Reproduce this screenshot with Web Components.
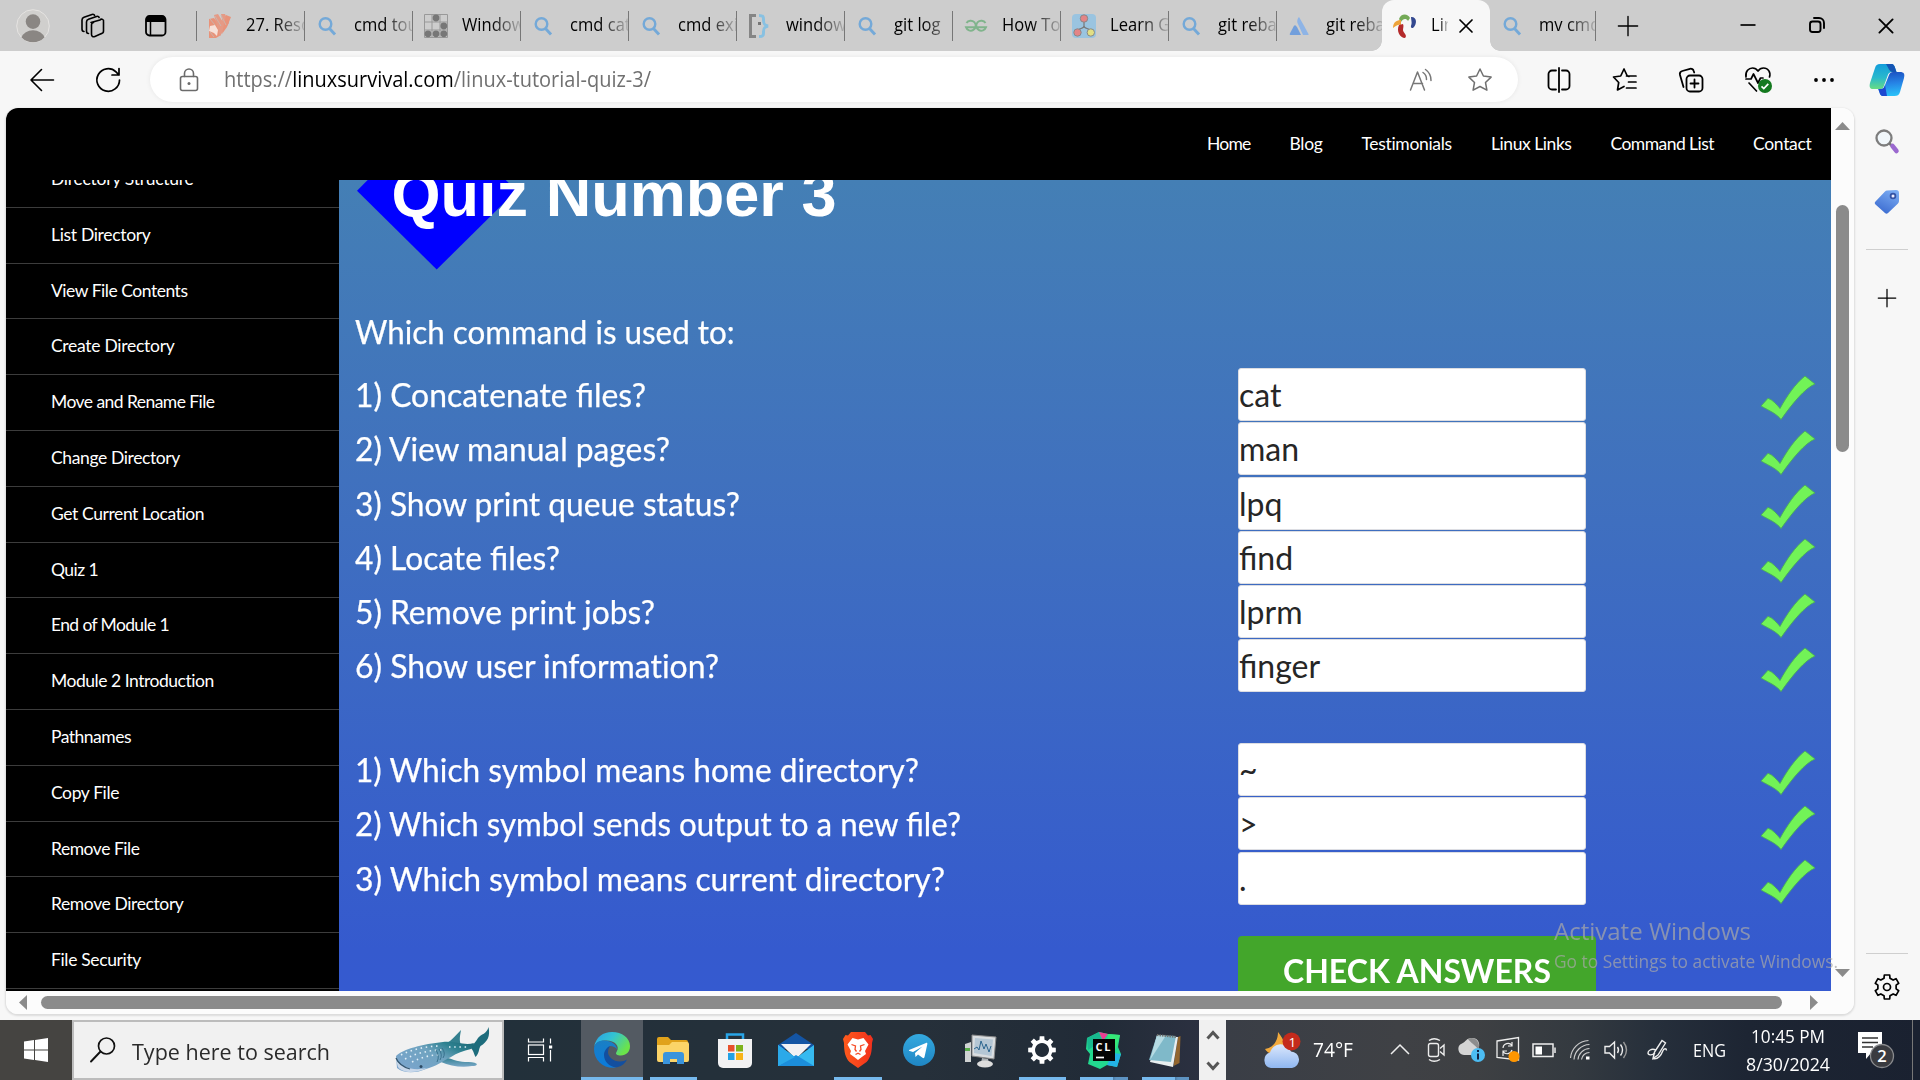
<!DOCTYPE html>
<html lang="en">
<head>
<meta charset="utf-8">
<title>Linux Tutorial Quiz 3</title>
<style>
html,body{margin:0;padding:0}
body{width:1920px;height:1080px;overflow:hidden;background:#f7f7f7;font-family:"Open Sans","Noto Sans",sans-serif}
</style>
</head>
<body>
<desktop-screen></desktop-screen>
<script>
const define = (name, html, after) => {
  const t = document.createElement('template');
  customElements.define(name, class extends HTMLElement {
    connectedCallback() {
      if (this.shadowRoot) return;
      const root = this.attachShadow({mode: 'open'});
      t.innerHTML = typeof html === 'function' ? html(this) : html;
      root.appendChild(t.content.cloneNode(true));
      if (after) after(this, root);
    }
  });
};

/* Text set to a fixed advance: "track" changes letter spacing, otherwise glyphs are condensed. */
define('fit-text', `<style>:host{display:inline-block;white-space:pre}span{display:inline-block;transform-origin:0 50%;white-space:pre}</style><span><slot></slot></span>`,
(el, root) => {
  const s = root.querySelector('span'), w = +el.getAttribute('w'), n = s.getBoundingClientRect().width;
  if (!w || !n) return;
  el.style.width = w + 'px';
  if (el.hasAttribute('track')) s.style.letterSpacing = ((w - n) / el.textContent.length) + 'px';
  else s.style.transform = `scaleX(${w / n})`;
});

const L = 'fill="none" stroke="currentColor" stroke-linecap="round" stroke-linejoin="round"';
const gearPath = (r1, r2, n, c) => {
  let d = '';
  for (let i = 0; i < n; i++) {
    const a = i * 2 * Math.PI / n - Math.PI / 2, p = (r, o) => (c + r * Math.cos(a + o)).toFixed(2) + ' ' + (c + r * Math.sin(a + o)).toFixed(2);
    const h = Math.PI / n;
    d += (i ? 'L' : 'M') + p(r1, -h * .62) + 'L' + p(r2, -h * .42) + 'L' + p(r2, h * .42) + 'L' + p(r1, h * .62);
  }
  return d + 'Z';
};
const I = {
avatar: [34, `<circle cx="17" cy="17" r="16.3" fill="#d0cfcd" stroke="#e6e4e2"/><circle cx="17" cy="12.6" r="7.3" fill="#8a8683"/><path d="M5.5 28.5a12 10 0 0 1 23 0a16.3 16.3 0 0 1-23 0z" fill="#8a8683"/>`],
spaces: [26, `<g ${L} stroke-width="1.6"><path d="M11 9.5l9-2.6a2 2 0 0 1 3.500 1.800v9.400a2.500 2.500 0 0 1-2 2.500l-6.600 2.800a2.200 2.200 0 0 1-3.400-2v-9.600a2.600 2.600 0 0 1 2-2.400z"/><path d="M8.500 20.500c-1.500 0-2-1-2-2.500V9a3 3 0 0 1 2-2.800l8-2.800c1.500-.4 2.200 0 2.600 1"/><path d="M4 18.500c-1.500 0-2-1-2-2.500V7a3 3 0 0 1 2-2.800l8-2.800c1.500-.4 2.200 0 2.600 1"/></g>`],
tabact: [24, `<rect x="2" y="2" width="19.500" height="19.500" rx="3.500" ${L} stroke-width="1.800"/><path d="M2 8V5.500A3.500 3.500 0 0 1 5.500 2h12.500a3.500 3.500 0 0 1 3.500 3.500V8z"/><path d="M6.500 8v13" ${L} stroke-width="1.500"/>`],
search: [24, `<circle cx="9.500" cy="10" r="5.800" fill="none" stroke="#74a9d8" stroke-width="2.400"/><path d="M13.500 14.500l5.500 6" stroke="#74a9d8" stroke-width="2.900"/>`],
hand: [24, `<path d="M1 5l5-1 6 8 1 9-5 3H1z" fill="#e8937a"/><path d="M6 1l4-1 8 13-6 9zM13 0h4l4 9-5 7z" fill="#e59a85"/><path d="M18 1l5 2-4 10-5 7z" fill="#e8937a"/><path d="M2 12l5-1 3 5-1 6-3-3-5-2z" fill="#f6e0d8"/><path d="M2 5l5 6M7 2l6 10M13 1l5 10M2 18l4 5" stroke="#cdb3ab" stroke-width="1"/>`],
grid: [24, `<path d="M.5.5h23v23H.5zM8 .5v23M16 .5v23M.5 8h23M.5 16h23" fill="none" stroke="#999"/><g fill="#777"><circle cx="12" cy="4" r="3.400"/><circle cx="19.800" cy="12" r="3.400"/><circle cx="4" cy="19.800" r="3.400"/><circle cx="12" cy="19.800" r="3.400"/><circle cx="19.800" cy="19.800" r="3.400"/></g>`],
brace: [24, `<path d="M8 1.500H2.500v21H8" fill="none" stroke="#858585" stroke-width="3"/><path d="M11 1.500c5 0 4.500 2 4.500 5s.5 4.500 4.500 5.500c-4 1-4.500 2.500-4.500 5.500s.5 5-4.500 5" fill="none" stroke="#88c1e2" stroke-width="3"/><rect x="10" y="8" width="3" height="3" fill="#777"/>`],
geeks: [24, `<path d="M2.500 9A5 5 0 1 1 2 13.200H22A5 5 0 1 1 21.500 9" fill="none" stroke="#80b48c" stroke-width="2"/>`],
learn: [24, `<rect width="24" height="24" rx="4" fill="#9ac4e0"/><path d="M12 8v4c0 3-6 2-6 5M12 12c0 3 6 2 6 5" fill="none" stroke="#777" stroke-width="1.200"/><g stroke="#888"><circle cx="12" cy="4.500" r="3.700" fill="#e38486"/><circle cx="5.500" cy="18.500" r="3.700" fill="#e38486"/><circle cx="18.800" cy="18.500" r="3.700" fill="#e2df83"/></g>`],
atl: [24, `<path d="M9 13l4 8H2.500c-.8 0-1-.6-.7-1.200L6 11.800c1-1.400 2-.3 3 1.200z" fill="#729fdc"/><path d="M11 3c3 5 6.500 11.500 9.500 17 .3.600 0 1-.6 1H15L9.500 9c-.8-1.800.2-5 1.500-6z" fill="#8eb4e6"/>`],
pin: [24, `<path d="M6 5C8-1 15-.5 17 4l-2 3c-2-3-5-2.500-7 1z" fill="#74aa57"/><path d="M18 3c6-.5 6.500 7 2 11-3 0-2-2-1.500-4s-.5-4.500-.5-7z" fill="#33488f"/><path d="M0 14c0-6 4-8 8-8v5c-3-1-5 1-8 3z" fill="#eda33a"/><path d="M6 11c-3 6 1 13 6 13 3-3-2-5-2-8 0-2 1-4 0-6z" fill="#b42a2b"/>`],
x: [20, `<path d="M4 4l12 12M16 4L4 16" ${L} stroke-width="1.700"/>`],
plus: [24, `<path d="M12 1.500v21M1.500 12h21" ${L} stroke-width="1.500"/>`],
min: [20, `<path d="M2.500 10h15" stroke="currentColor" stroke-width="1.700"/>`],
restore: [20, `<g ${L} stroke-width="1.900"><rect x="3" y="6.500" width="10.500" height="10.500" rx="2.500"/><path d="M7 3h5a5 5 0 0 1 5 5v5"/></g>`],
back: [26, `<path d="M24.500 13H2M12.500 2.500L2 13l10.500 10.500" ${L} stroke-width="1.600"/>`],
reload: [26, `<path d="M24.500 13A11.300 11.300 0 1 1 21 4.800L24 8M24 1.500V8h-7" ${L} stroke-width="1.700"/>`],
lock: [24, `<g color="#6b6b6b"><g ${L} stroke-width="1.600"><rect x="3.500" y="8.500" width="17" height="14" rx="2"/><path d="M7.500 8.500V5.500a4.500 4.500 0 0 1 9 0v3"/></g></g><circle cx="12" cy="15.500" r="1.500" fill="#6b6b6b"/>`],
aloud: [24, `<g color="#777"><path d="M1.500 22L8.500 4l7 18M4 15.500h9.500M14 4.500a8 8 0 0 1 3.500 7M16.500 1.500a13 13 0 0 1 5.500 11" ${L} stroke-width="1.500"/></g>`],
star: [26, `<g color="#707070"><path d="M13 2l3.400 7 7.700 1.100-5.600 5.400 1.400 7.700L13 19.500l-6.900 3.700 1.400-7.700-5.600-5.400L9.600 9z" ${L} stroke-width="1.500"/></g>`],
split: [26, `<g ${L} stroke-width="1.800"><path d="M10 3.500H6a3.500 3.500 0 0 0-3.500 3.500v12A3.500 3.500 0 0 0 6 22.500h4M16 3.500h4A3.500 3.500 0 0 1 23.500 7v12a3.500 3.500 0 0 1-3.500 3.500h-4M13 1v24"/></g>`],
favs: [26, `<path d="M14.500 9H24M16.500 15H24M14.500 21H24M17 9.500L15.300 9 12 2 8.700 9 1.500 10l5.200 5.500L5.500 23l6.500-3.500" ${L} stroke-width="1.700"/>`],
coll: [26, `<g ${L} stroke-width="1.800"><rect x="8.500" y="8.500" width="16" height="16" rx="3.500"/><path d="M16.500 12.500v8M12.500 16.500h8M5.500 20L2 8a3.300 3.300 0 0 1 2.300-4L12 1.800a3 3 0 0 1 3.700 2.200l.5 1.500"/></g>`],
heart: [28, `<g ${L} stroke-width="1.700"><path d="M2 11C1 5 5 2 8.500 2 11 2 13 3.500 14 5c1-1.500 3-3 5.500-3C24 2 27 6 25.500 11M5 17l7.500 8M2 13h5l2.500-5 4.500 9 2.500-5H19"/></g><circle cx="21" cy="20" r="7" fill="#14791f"/><path d="M17.500 20.300l2.300 2.200 4.500-4.700" fill="none" stroke="#fff" stroke-width="1.700"/>`],
dots: [24, `<circle cx="4" cy="12" r="1.900"/><circle cx="12" cy="12" r="1.900"/><circle cx="20" cy="12" r="1.900"/>`],
copilot: [36, `<defs><linearGradient id="a" x1="0" y1="0" x2="0" y2="1"><stop stop-color="#139ddb"/><stop offset=".55" stop-color="#29b9cc"/><stop offset="1" stop-color="#68dc83"/></linearGradient><linearGradient id="b" x1=".2" y1="0" x2=".3" y2="1"><stop stop-color="#1c4fc0"/><stop offset=".5" stop-color="#2684e6"/><stop offset="1" stop-color="#2ac0f8"/></linearGradient></defs><path d="M11 2h11c3 0 3.500 2 4.500 5l1 3h-4c-3 0-4 1-5 4l-4 11c-.7 2-2 2-4 2H4c-3 0-4-2-3-6L6 6c1-3 2-4 5-4z" fill="url(#a)"/><path d="M17 2h5c3 0 3.500 2 4.500 5l1 3h-4c-3 0-4.500-5-6.500-8z" fill="#1555b4"/><path d="M25.500 34h-11c-3 0-3.500-2-4.500-5l-.7-2H12c2 0 3-1 4-4l4-10c.8-2 2-3 4-3h7c4 0 5 2 4 6l-4 14c-1 3-2.500 4-5.500 4z" fill="url(#b)"/><path d="M9.300 27H12c2 0 3-1 4-4l2 11h-3.500c-3 0-3.500-2-4.500-5z" fill="#1d48d0"/>`],
sbsearch: [26, `<circle cx="10" cy="10" r="7.500" fill="#f1f7fb" stroke="#7d7d7d" stroke-width="2.300"/><path d="M15 15l4 4" stroke="#777" stroke-width="2.500"/><path d="M18.500 18l4 5" stroke="#9b69cf" stroke-width="4.500" stroke-linecap="round"/>`],
tag: [26, `<defs><linearGradient id="t" x1=".8" y1="0" x2=".3" y2="1"><stop stop-color="#7cadf3"/><stop offset="1" stop-color="#3b6bd0"/></linearGradient></defs><path d="M13 1.500L22 1c2 0 3 1 3 3v8c0 1-.3 1.700-1 2.500L14 24c-1 1-2 1-3 0L1.500 15.500c-1-1-1-2 0-3L11 2.500c.6-.6 1.200-1 2-1z" fill="url(#t)"/><circle cx="19" cy="7" r="2.400" fill="#eef" stroke="#3554a5" stroke-width="1.800"/>`],
cog: [28, `<path d="${gearPath(9.300, 12.300, 6, 14)}" ${L} stroke-width="1.700"/><circle cx="14" cy="14" r="3.500" ${L} stroke-width="1.700"/>`],
check: [54, `<path d="M0 30L7 22.300C12 24 16 29 19 32.500C26 20 34 8 44 0L54 8C44 12 31 28 20 43.600C16 38 9 35 0 30z" fill="#72f357" stroke="#4aab5a" stroke-width=".9"/>`],
win: [26, `<path d="M1 4.500l10-1.400V12.500H1zM12 3l13-2v11.500H12zM1 13.500h10v9.400L1 21.500zM12 13.500h13V25l-13-2z" fill="#fff"/>`],
mag: [28, `<circle cx="17.500" cy="10" r="8" ${L} stroke-width="1.700"/><path d="M11.500 15.500L2 25.500" ${L} stroke-width="1.900"/>`],
taskview: [28, `<g fill="none" stroke="#fff" stroke-width="1.200"><path d="M2.500 2.500v3.500h15V2.500M2.500 25.500v-4h15v4"/><rect x="2.500" y="9" width="15" height="9.500"/><path d="M24.500 2.500v5M24.500 14v11.500"/></g><rect x="23" y="9.500" width="3.200" height="3" fill="#fff"/>`],
edge: [36, `<defs><linearGradient id="e1" x1="0" y1="0" x2="1" y2=".5"><stop stop-color="#2a9ee8"/><stop offset=".5" stop-color="#33c3d2"/><stop offset="1" stop-color="#6be34a"/></linearGradient><linearGradient id="e2" x1="0" y1="0" x2="0" y2="1"><stop stop-color="#1a7fc4"/><stop offset="1" stop-color="#0b7bdc"/></linearGradient></defs><path d="M0 15C2 5 9 0 18 0c10 0 18 6 18 14 0 6-4 9.500-9 9.500-4 0-6-1.500-4.500-3.500 4-6-2-11.500-10-11.500C6 8.500 2 10 0 15z" fill="url(#e1)"/><path d="M0 17C0 11 5 8.500 10 8.500c7 0 13 4 13 9-1-2-4-3.500-7-3.500-4 3-5 14 6 21.600C10 37 0 29 0 17z" fill="url(#e2)"/><path d="M16 14c-3 1-6 5-6 9 0 8 8 13.500 14 12 4-1 7.500-4 9-7.500-2 1-4 2-7 2-7 0-12-5-12-9 0-3 1-5 2-6.500z" fill="#134f9f"/>`],
folder: [34, `<path d="M1 6a2 2 0 0 1 2-2h9l3 3h15a2 2 0 0 1 2 2v5H1z" fill="#e0a21b"/><path d="M1 12h12l3-3h15a2 2 0 0 1 2 2v16a2 2 0 0 1-2 2H3a2 2 0 0 1-2-2z" fill="#fbd468"/><path d="M7 31V22a3 3 0 0 1 3-3h15a3 3 0 0 1 3 3v9h-7v-5h-7v5z" fill="#3a94dc"/>`],
store: [36, `<path d="M10 8V2.500h16V8" fill="none" stroke="#29a5e8" stroke-width="2.500"/><path d="M1 7h34v24a5 5 0 0 1-5 5H6a5 5 0 0 1-5-5z" fill="#f2f2f3"/><path d="M11 13h6.500v6.500H11z" fill="#e8502c"/><path d="M19 13h7v6.500h-7z" fill="#7eb31d"/><path d="M11 21h6.500v7H11z" fill="#21a1e5"/><path d="M19 21h7v7h-7z" fill="#f7b318"/>`],
mail: [36, `<path d="M0 13L18 1l18 12v4H0z" fill="#1455a4"/><path d="M3 12h30L18 27z" fill="#f1f1f4"/><path d="M0 13l18 13L36 13v21H0z" fill="#36baf0"/><path d="M0 34l18-11L36 34z" fill="#1c8edb"/><path d="M0 13l17 12L0 34z" fill="#2ba9e9"/><path d="M4 12.500h28L18 23z" fill="#f1f1f4"/>`],
brave: [36, `<defs><linearGradient id="br" x1="0" y1="0" x2="1" y2="0"><stop stop-color="#ff5b1c"/><stop offset="1" stop-color="#f2301d"/></linearGradient></defs><path d="M11 0h14l3 3.500 2.500-.5L33 7l-1 4c0 9-1.500 15-5.500 19L18 36l-8.500-6C5.500 26 4 20 4 11L3 7l2.500-4 2.500.5z" fill="url(#br)"/><path d="M18 7.500l5.500-1.500 5 6.500-3.500 6.500 1 3-4.500 3.200-3.500 2.800-3.500-2.800L10 22l1-3-3.500-6.500 5-6.500z" fill="#fff"/><path d="M11.500 12.500l4 1.500-.5 3.500 1.500 2M24.500 12.500l-4 1.500.5 3.500-1.500 2M15.500 22.500l2.500-1.300 2.500 1.300" fill="none" stroke="#f64b25" stroke-width="1.300"/>`],
tele: [32, `<defs><linearGradient id="g" x1="0" y1="0" x2="0" y2="1"><stop stop-color="#34a9df"/><stop offset="1" stop-color="#1f86c4"/></linearGradient></defs><circle cx="16" cy="16" r="16" fill="url(#g)"/><path d="M6 16l17-7c1-.4 1.500.1 1.300 1.200L21.500 23c-.2 1.200-1 1.400-2 .8L15 20.500 12.500 23l-.5-4 7.500-6.500L10 18l-4-1.200z" fill="#fff"/>`],
monitor: [36, `<path d="M2 12l6-2v20H2z" fill="#cfd2d2"/><path d="M2 16h5v3H2z" fill="#59ad4b"/><path d="M9 3l24 2-2 22-22-3z" fill="#d9dde0" stroke="#888"/><path d="M12 6l18 1.500L28.500 24 11 21z" fill="#b4c6d4"/><path d="M11 17l3-2 2 3 2-9 3 8 2-5 3 8 2-6" fill="none" stroke="#2b658f" stroke-width="1"/><path d="M19 26l6 1 1 4h-8z" fill="#abb0b3"/><ellipse cx="22" cy="32" rx="8" ry="3.500" fill="#ddd"/>`],
gear: [30, `<path fill-rule="evenodd" d="${gearPath(10.500, 14, 8, 15)}M15 8a7 7 0 1 0 .01 0z" fill="#fff"/>`],
clion: [38, `<path d="M2 7l12-6 9 2 12 1-2 12 3 7-4 13-10-2-7 4L3 33l2-10-4-5z" fill="#22d88f"/><path d="M2 7l12-6 3 9-14 9z" fill="#18b98e"/><path d="M14 1l9 2-5 7z" fill="#eb3f92"/><path d="M23 3l12 1-4 14-9-6z" fill="#36e878"/><path d="M28 22l8 1-4 13-10-2z" fill="#23b2e5"/><rect x="8" y="8" width="22" height="22" fill="#050505"/><text x="10.500" y="19.500" font-family="Open Sans" font-weight="700" font-size="11" textLength="15" fill="#fff">CL</text><path d="M11 26.500h8" stroke="#fff" stroke-width="1.700"/>`],
note: [36, `<path d="M31 5l2.500-1-1 27-6 3z" fill="#92662f"/><path d="M10 4l21 1-5 30L3 30z" fill="#e9eff0"/><path d="M10 3l19 1-5 26L2 28z" fill="#7fb9c9"/><path d="M10 3l9 .5L3 28z" fill="#b6dbe3"/><path d="M10 3l19 2" stroke="#71706c" stroke-width="2" stroke-dasharray="1.500 1"/>`],
up: [16, `<path d="M2.500 11.500L8 5.500l5.500 6" fill="none" stroke="#555" stroke-width="3"/>`],
down: [16, `<path d="M2.500 4.500L8 10.500l5.500-6" fill="none" stroke="#555" stroke-width="3"/>`],
weather: [38, `<defs><linearGradient id="w" x1="0" y1="0" x2="0" y2="1"><stop stop-color="#dce8fc"/><stop offset="1" stop-color="#8fb7f1"/></linearGradient></defs><path d="M15 1c5 6 9 14 5 21C12 26 4 22 2 18c8-1 13-8 13-17z" fill="#f2a93c"/><path d="M8 37a8 8 0 0 1-1-15.500 11 11 0 0 1 21-1A8.300 8.300 0 0 1 29 37z" fill="url(#w)"/><circle cx="28.500" cy="10.500" r="9" fill="#c42b1c"/><text x="25.500" y="15.500" font-family="Open Sans" font-size="13.500" fill="#fff">1</text>`],
chev: [22, `<path d="M2 15l9-9 9 9" fill="none" stroke="#eee" stroke-width="1.500"/>`],
cam: [26, `<g fill="none" stroke="#eee" stroke-width="1.400"><rect x="5.500" y="6.500" width="10" height="13" rx="2"/><path d="M17 11.500l4-3.500v10l-4-3.500M6 3.500q5-3.500 11 0M6 22.500q5 3.500 11 0"/></g>`],
cloud: [28, `<path d="M6 19a6 6 0 0 1-2-11.500C8 6 8 2 14 2c6 0 8 5 7 9v8z" fill="#d4d4d4"/><path d="M10 3c5-3 11 1 11 7v4C16 8 13 7 10 3z" fill="#8d8d8d"/><circle cx="20" cy="19" r="7" fill="#4cbcf2"/><path d="M20 17.500v6M20 14v2" stroke="#124" stroke-width="2"/>`],
update: [28, `<path d="M3 5l21.500-3.500v22.500L3 21.500z" fill="none" stroke="#eee" stroke-width="1.300"/><path d="M9 12a5 5 0 0 1 9-2.500M18 6v4h-4M18 14a5 5 0 0 1-9 1.500M9 20v-5h4" fill="none" stroke="#eee" stroke-width="1.200"/><circle cx="20" cy="20.500" r="5.500" fill="#ff9600"/>`],
battery: [26, `<rect x="2" y="7" width="20" height="12.500" fill="none" stroke="#eee" stroke-width="1.500"/><rect x="4.500" y="9.500" width="6.500" height="8" fill="#fff"/><path d="M24 10.500v5.500" stroke="#eee" stroke-width="1.500"/>`],
wifi: [26, `<g transform="translate(1.500 0)" fill="none" stroke="#ccc" stroke-width="1.200"><path d="M13 22.500a8 8 0 0 1 8-7M9.500 22.500A12 12 0 0 1 21 11.500M5.500 22.500A16 16 0 0 1 21 7.500M2 21A19 19 0 0 1 20 3.500"/></g><rect x="19" y="19.500" width="3.500" height="3" fill="#fff"/>`],
vol: [26, `<g fill="none" stroke="#eee" stroke-width="1.400"><path d="M2 9.500h4.500L11.500 5v16l-5-5H2zM14.500 10q2 3 0 6M17.500 7.500q4 5.500 0 11"/><path d="M20.500 5q6 8 0 16" stroke="#999"/></g>`],
pen: [26, `<g fill="none" stroke="#eee" stroke-width="1.400"><path d="M8 21.500L9.500 15 17 3.500l3.500 2.500L13 18z"/><path d="M11 13c-5-2-8 1-8 3s4 3 7 0M8 21.500c5 1 8-3 9.500-7s4-3 4-1"/></g>`],
notif: [42, `<path d="M2 2h24v21H15l-5 6v-6H2z" fill="#fff"/><path d="M6 8h16M6 12.500h16M6 17h11" stroke="#333" stroke-width="1.500"/><circle cx="26" cy="26" r="11.500" fill="#3a3b40" stroke="#8a8b8e" stroke-width="1.300"/><text x="21.300" y="32" font-family="Open Sans" font-weight="600" font-size="16.500" fill="#fff">2</text>`],
shark: [96, `<defs><linearGradient id="s" x1="0" y1=".8" x2="1" y2="0"><stop stop-color="#7ba5cd"/><stop offset=".5" stop-color="#6fa3c0"/><stop offset=".75" stop-color="#2f8291"/><stop offset="1" stop-color="#1a6674"/></linearGradient><linearGradient id="f" x1="0" y1="0" x2="0" y2="1"><stop stop-color="#2b7c8c"/><stop offset="1" stop-color="#7ba9c9"/></linearGradient></defs><g transform="translate(0 23)"><path d="M52 16c5-3 9-8 14-13-1 6-2 10 0 15z" fill="#34808f"/><path d="M48 30c8 1 14 5 22 5 5 0 9 0 12 2-1 2-2 2-5 2-10 2-22 0-31-4z" fill="url(#f)"/><path d="M74 20c4-2 6-4 9-9 3-4 9-4 10.500-11 2 9-1 15-8 19-2 3-1 7-5 11-2-4-2-7-5-9z" fill="#1d6c7c"/><path d="M1 29C8 22 28 17 48 15c12-1 22 4 31 1l-3 6c-8 2-14 4-20 8-10 5-14 9-25 12-9 4-22 5-29-1z" fill="url(#s)"/><path d="M1 33c6 8 18 11 31 8-10 5-24 6-29-1z" fill="#c9d8ea"/><path d="M1 31c2 5 7 9 14 11" fill="none" stroke="#35566f" stroke-width="1.300"/><circle cx="26" cy="39.500" r="1.500" fill="#2d4a63"/><path d="M6 28c12-6 26-9 40-9M10 32c14-7 26-9 40-9M17 35c10-5 18-7 27-7M54 20h20" stroke="#e1f0f8" stroke-width="1.600" stroke-dasharray="1.500 3.700" fill="none"/><path d="M41 23q4 6 1 12M44 22q4 6 1 11M47 21q4 5 1 10" fill="none" stroke="#39728e"/></g>`],
};
define('ui-icon', el => {
  const [vb, body] = I[el.getAttribute('name')], s = el.getAttribute('size') || vb;
  return `<style>:host{display:inline-flex;flex:none}svg{display:block;overflow:visible}</style><svg width="${s}" height="${s}" viewBox="0 0 ${vb} ${vb}" fill="currentColor">${body}</svg>`;
});

define('browser-tab', el => `<style>
:host{display:flex;box-sizing:border-box;width:108px;height:51px;flex:none;align-items:center;padding-left:11px;position:relative;color:#000}
:host([active]){background:#f7f7f7;border-radius:12px 12px 0 0}
:host([active])::before,:host([active])::after{content:"";position:absolute;bottom:0;width:10px;height:10px}
:host([active])::before{left:-10px;background:radial-gradient(circle at 0 0,transparent 9.500px,#f7f7f7 10px)}
:host([active])::after{right:-10px;background:radial-gradient(circle at 100% 0,transparent 9.500px,#f7f7f7 10px)}
.t{margin-left:14px;flex:1;min-width:0;height:28px;line-height:27px;font-size:18px;margin-bottom:1px;overflow:hidden;white-space:nowrap;-webkit-mask-image:linear-gradient(90deg,#000 50%,transparent 108%)}
.t span{display:inline-block;transform:scaleX(.92);transform-origin:0 50%}
i{width:1.500px;height:30px;background:#777;flex:none}
:host([active]) .t{flex:none;width:17px}
ui-icon[name=x]{margin-left:8px}
</style><ui-icon name="${el.getAttribute('icon')}"></ui-icon><div class="t"><span><slot></slot></span></div>${el.hasAttribute('active') ? '<ui-icon name="x"></ui-icon>' : el.hasAttribute('bare') ? '' : '<i></i>'}`);

define('tab-strip', `<style>
:host{display:flex;height:51px;background:#cdcdcd;align-items:center}
.lead{display:flex;align-items:center;width:197px;box-sizing:border-box;flex:none;padding-left:16px;height:51px}
.lead ui-icon:nth-child(2){margin-left:30px}.lead ui-icon:nth-child(3){margin-left:38px}
.lead i{width:1.500px;height:30px;background:#777;margin-left:auto}
.plus{margin-left:21px}.ctl{margin-left:auto;display:flex;padding-right:0}
.ctl div{width:69px;display:flex;justify-content:center}
</style><div class="lead"><ui-icon name="avatar"></ui-icon><ui-icon name="spaces"></ui-icon><ui-icon name="tabact"></ui-icon><i></i></div>
<browser-tab icon="hand">27. Reso</browser-tab><browser-tab icon="search">cmd tou</browser-tab><browser-tab icon="grid">Windows</browser-tab><browser-tab icon="search">cmd cat</browser-tab><browser-tab icon="search">cmd exit</browser-tab><browser-tab icon="brace">windows</browser-tab><browser-tab icon="search">git log</browser-tab><browser-tab icon="geeks">How To</browser-tab><browser-tab icon="learn">Learn Git</browser-tab><browser-tab icon="search">git rebas</browser-tab><browser-tab icon="atl" bare style="width:105px">git rebas</browser-tab><browser-tab icon="pin" active>Linux</browser-tab><browser-tab icon="search" style="width:106px">mv cmd</browser-tab>
<ui-icon class="plus" name="plus" size="22"></ui-icon>
<div class="ctl"><div><ui-icon name="min"></ui-icon></div><div><ui-icon name="restore"></ui-icon></div><div><ui-icon name="x" size="22"></ui-icon></div></div>`);

define('tool-bar', `<style>
:host{display:flex;height:57px;align-items:center;background:#f7f7f7;box-sizing:border-box}
.nav{width:150px;display:flex;align-items:center;padding-left:29px;gap:40px;box-sizing:border-box}
.pill{width:1368px;height:45px;border-radius:23px;background:#fff;display:flex;align-items:center;box-shadow:0 0 5px #00000012;box-sizing:border-box;padding:0 25px 0 27px;flex:none}
.url{margin-left:23px;font-size:21px;line-height:33px;margin-bottom:1px;color:#707070}
.url b{font-weight:400;color:#000}
.pill .a{margin-left:auto;margin-right:34px}
.r{display:flex;padding-left:8px}.r div{width:66.200px;display:flex;justify-content:center;align-items:center}
.r div:last-child{width:60px}
</style><div class="nav"><ui-icon name="back"></ui-icon><ui-icon name="reload"></ui-icon></div>
<div class="pill"><ui-icon name="lock"></ui-icon><fit-text class="url" w="427">https://<b>linuxsurvival.com</b>/linux-tutorial-quiz-3/</fit-text><ui-icon class="a" name="aloud"></ui-icon><ui-icon name="star"></ui-icon></div>
<div class="r"><div><ui-icon name="split"></ui-icon></div><div><ui-icon name="favs"></ui-icon></div><div><ui-icon name="coll"></ui-icon></div><div><ui-icon name="heart"></ui-icon></div><div><ui-icon name="dots"></ui-icon></div><div><ui-icon name="copilot"></ui-icon></div></div>`);

define('site-header', `<style>
:host{display:flex;height:72px;background:#000;color:#fff;align-items:center;justify-content:flex-end;gap:39px;padding-right:19.500px;font:17.500px/30px Lato,sans-serif;flex:none}
</style><fit-text track w="43.500">Home</fit-text><fit-text track w="33">Blog</fit-text><fit-text track w="90.500">Testimonials</fit-text><fit-text track w="80.500">Linux Links</fit-text><fit-text track w="103.500">Command List</fit-text><fit-text track w="58.500">Contact</fit-text>`);

const lessons = [['Directory Structure',142.5],['List Directory',99.5],['View File Contents',136.5],['Create Directory',123.5],['Move and Rename File',163.5],['Change Directory',129],['Get Current Location',153.5],['Quiz 1',47],['End of Module 1',118],['Module 2 Introduction',163],['Pathnames',80],['Copy File',68],['Remove File',88.5],['Remove Directory',132.5],['File Security',90]];
define('lesson-menu', `<style>
:host{display:flex;flex-direction:column;width:333px;flex:none;background:#000;color:#fff;font:17.500px/53px Lato,sans-serif;overflow:hidden}
div{height:55.800px;flex:none;box-sizing:border-box;border-bottom:1px solid #3c3c3c;padding-left:45px}
div:first-of-type{margin-top:-28px}
</style>${lessons.map(([t, w]) => `<div><fit-text track w="${w}">${t}</fit-text></div>`).join('')}`);

define('quiz-row', el => `<style>
:host{display:flex;height:54.300px;color:#fff;font:32.500px/53px Lato,sans-serif}
.q{width:883px;flex:none;-webkit-text-stroke:.25px #fff}
:host([plain]) .q{font-variant-ligatures:none}
.in{width:348px;height:53px;box-sizing:border-box;background:#fff;border:1px solid #dcdde2;border-radius:3px;color:#262626;flex:none;font-size:32px;line-height:51px}
ui-icon{margin-left:175px;margin-top:8.400px;height:44px}
</style><div class="q"><fit-text w="${el.getAttribute('w')}"><slot></slot></fit-text></div><div class="in">${el.getAttribute('answer')}</div><ui-icon name="check"></ui-icon>`,
(el, root) => {
  const f = root.querySelector('fit-text');
  f.textContent = el.textContent;
  const s = f.shadowRoot && f.shadowRoot.querySelector('span');
  if (s) { s.style.transform = ''; s.style.transform = `scaleX(${el.getAttribute('w') / s.getBoundingClientRect().width})`; }
});

define('quiz-page', `<style>
:host{display:block;flex:1;overflow:hidden;background:linear-gradient(180deg,#447fb5 0,#4071be 37%,#355ace 95%,#355ad0 100%);color:#fff;font:32.500px/44px Lato,sans-serif;padding-left:16px;box-sizing:border-box}
.logo{display:block;height:129px}
.h{height:43px;padding-top:1px;margin-bottom:15px;-webkit-text-stroke:.25px #fff}
.g2{margin-top:49.200px}
.btn{margin:30px 0 0 883px;width:358px;height:80px;background:#43a62b;border-radius:4px;box-sizing:border-box;padding:13px 0 0 44.500px;font-weight:700}
</style>
<svg class="logo" width="700" height="129" viewBox="355 180 700 129"><path d="M357 190.700L436.700 111l79.800 79.700-79.800 78.800z" fill="#00f"/><text x="391.500" y="215.700" font-family="Liberation Sans" font-weight="700" font-size="63" textLength="445" lengthAdjust="spacingAndGlyphs" fill="#fff">Quiz Number 3</text></svg>
<div class="h"><fit-text w="379.500">Which command is used to:</fit-text></div>
<quiz-row w="291" answer="cat">1) Concatenate files?</quiz-row>
<quiz-row w="315" answer="man">2) View manual pages?</quiz-row>
<quiz-row w="385" answer="lpq">3) Show print queue status?</quiz-row>
<quiz-row w="205" answer="find">4) Locate files?</quiz-row>
<quiz-row w="300" answer="lprm">5) Remove print jobs?</quiz-row>
<quiz-row plain w="364" answer="finger">6) Show user information?</quiz-row>
<div class="g2"></div>
<quiz-row w="564" answer="~">1) Which symbol means home directory?</quiz-row>
<quiz-row w="606" answer="&gt;">2) Which symbol sends output to a new file?</quiz-row>
<quiz-row w="590" answer=".">3) Which symbol means current directory?</quiz-row>
<div class="btn"><fit-text w="268">CHECK ANSWERS</fit-text></div>`);

define('scroll-bar', `<style>
:host{display:flex;background:#fcfcfc;align-items:center;flex:none;box-sizing:border-box}
:host([v]){flex-direction:column;width:23px;padding:14px 0}
:host([h]){height:23px;padding:0 36px 0 13px}
i{display:block;background:#8b8b8b;flex:none}
:host([v]) .a{width:15px;height:8px;clip-path:polygon(50% 0,100% 100%,0 100%)}
:host([v]) .b{width:15px;height:8px;clip-path:polygon(50% 100%,100% 0,0 0);margin-top:auto}
:host([v]) .t{width:13px;height:247px;border-radius:7px;margin-top:75px}
:host([h]) .a{width:8px;height:15px;clip-path:polygon(0 50%,100% 0,100% 100%)}
:host([h]) .b{width:8px;height:15px;clip-path:polygon(100% 50%,0 0,0 100%);margin-left:auto}
:host([h]) .t{height:13px;width:1741px;border-radius:7px;margin-left:14px}
</style><i class="a"></i><i class="t"></i><i class="b"></i>`);

define('web-view', `<style>
:host{display:flex;flex-direction:column;width:1848px;height:906px;border-radius:12px;overflow:hidden;background:#fcfcfc;box-shadow:0 1px 2px 1px #0000001c;margin-left:6px;flex:none}
.top{display:flex;height:883px;flex:none}.page{width:1825px;display:flex;flex-direction:column}.body{display:flex;flex:1;min-height:0}
</style><div class="top"><div class="page"><site-header></site-header><div class="body"><lesson-menu></lesson-menu><quiz-page></quiz-page></div></div><scroll-bar v></scroll-bar></div><scroll-bar h></scroll-bar>`);

define('side-rail', `<style>
:host{display:flex;flex-direction:column;align-items:center;flex:1;box-sizing:border-box;padding:20px 1px 19px 0}
i{width:42px;height:1px;background:#cfcfcf;flex:none}
.tag{margin:35px 0 34px}.p{margin:38px 0 auto}.c{margin-top:19px}
</style><ui-icon name="sbsearch"></ui-icon><ui-icon class="tag" name="tag"></ui-icon><i></i><ui-icon class="p" name="plus" size="20"></ui-icon><i></i><ui-icon class="c" name="cog"></ui-icon>`);

define('task-button', el => `<style>
:host{display:flex;box-sizing:border-box;width:61.500px;height:60px;flex:none;justify-content:center;align-items:center;position:relative}
:host([active]){background:#535a62}
:host([run])::after,:host([active])::after,:host([multi])::after{content:"";position:absolute;bottom:0;height:3px;left:7px;right:7px;background:#76b9ed}
:host([active])::after{left:0;right:0}
:host([multi])::after{background:linear-gradient(90deg,#76b9ed 33px,#4a7ba6 33px,#5d93c2 36px)}
</style><ui-icon name="${el.getAttribute('icon')}"></ui-icon>`);

define('task-bar', `<style>
:host{display:flex;height:60px;color:#fff}
.start{width:72px;background:#454441;display:flex;align-items:center;justify-content:center}
.search{width:432px;box-sizing:border-box;border:2px solid #bcbcbc;background:#f1f1f1;display:flex;align-items:center;padding-left:15px;color:#111}
.search fit-text{margin-left:15px;font-size:22px;line-height:34px;margin-top:1px;color:#2b2b2b}
.search ui-icon:last-child{margin-left:65px;height:92px}
.apps{width:695px;display:flex;background:linear-gradient(90deg,#22303a,#26303a 60%,#212b37 85%,#2b3040)}
.sc{width:27px;background:#f0f0f0;display:flex;flex-direction:column;justify-content:space-between;align-items:center;padding:7px 0 6px;box-sizing:border-box}
.tray{flex:1;display:flex;align-items:center;background:linear-gradient(90deg,#3a3e46 0,#3f4145 25%,#3e4043 36%,#343a40 50%,#262f3b 62%,#1d2533 75%,#1a2130 100%)}
.w{margin-left:37px}.deg{margin-left:12px;font-size:20px;line-height:30px}
.ic{display:flex;margin-left:29px}.ic div{width:36px;display:flex;justify-content:center;align-items:center}
.clock{margin-left:20px;display:flex;flex-direction:column;align-items:center;width:84px;font-size:18px;line-height:27.500px;padding-top:1px}
ui-icon[name=notif]{margin-left:26px;margin-top:2px}
.end{width:1px;height:60px;background:#777;margin-left:auto;margin-right:7px}
</style>
<div class="start"><ui-icon name="win"></ui-icon></div>
<div class="search"><ui-icon name="mag"></ui-icon><fit-text w="198">Type here to search</fit-text><ui-icon name="shark"></ui-icon></div>
<div class="apps"><task-button icon="taskview" style="width:77px;padding-right:5px"></task-button><task-button icon="edge" active></task-button><task-button icon="folder" run></task-button><task-button icon="store"></task-button><task-button icon="mail"></task-button><task-button icon="brave" run></task-button><task-button icon="tele"></task-button><task-button icon="monitor"></task-button><task-button icon="gear" run></task-button><task-button icon="clion" multi></task-button><task-button icon="note" multi></task-button></div>
<div class="sc"><ui-icon name="up"></ui-icon><ui-icon name="down"></ui-icon></div>
<div class="tray"><ui-icon class="w" name="weather"></ui-icon><fit-text class="deg" w="40">74°F</fit-text>
<div class="ic"><div><ui-icon name="chev"></ui-icon></div><div><ui-icon name="cam"></ui-icon></div><div><ui-icon name="cloud"></ui-icon></div><div><ui-icon name="update"></ui-icon></div><div><ui-icon name="battery"></ui-icon></div><div><ui-icon name="wifi"></ui-icon></div><div><ui-icon name="vol"></ui-icon></div><div style="width:47px"><ui-icon name="pen"></ui-icon></div></div>
<fit-text w="33" style="margin-left:12px;font-size:18px">ENG</fit-text>
<div class="clock"><fit-text w="74">10:45 PM</fit-text><fit-text w="84">8/30/2024</fit-text></div>
<ui-icon name="notif"></ui-icon><div class="end"></div></div>`);

define('activation-mark', `<style>
:host{position:absolute;left:1554px;top:914px;display:flex;flex-direction:column;color:#a8a8a8b8;font-size:18px;line-height:26px}
.b{font-size:24px;line-height:34px}
</style><fit-text class="b" w="197">Activate Windows</fit-text><fit-text w="284">Go to Settings to activate Windows.</fit-text>`);

define('desktop-screen', `<style>
:host{display:flex;flex-direction:column;width:1920px;height:1080px;position:relative;overflow:hidden;background:#f7f7f7}
.mid{display:flex;height:912px;flex:none}
</style><tab-strip></tab-strip><tool-bar></tool-bar><div class="mid"><web-view></web-view><side-rail></side-rail></div><task-bar></task-bar><activation-mark></activation-mark>`);
</script>
</body>
</html>
